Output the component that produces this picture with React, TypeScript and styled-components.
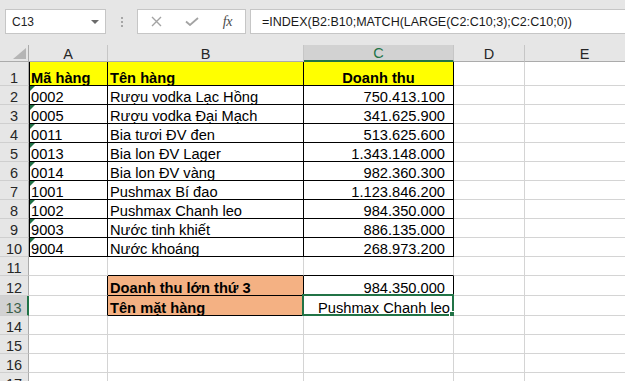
import React from 'react';
import styled, { createGlobalStyle } from 'styled-components';

const GRID = '#d4d4d4';
const INK = '#000';
const GREEN = '#217346';
const YELLOW = '#ffff00';
const ORANGE = '#f4b183';

const GlobalStyle = createGlobalStyle`
  html, body {
    margin: 0;
    padding: 0;
    background: #e6e6e6;
  }
  body {
    font-family: 'Liberation Sans', Arial, sans-serif;
  }
`;

const Screen = styled.div`
  width: 625px;
  height: 381px;
  overflow: hidden;
  background: #e6e6e6;
`;

/* ---------- formula bar ---------- */

const FormulaBar = styled.div`
  display: flex;
  align-items: flex-start;
  height: 45px;
  box-sizing: border-box;
  padding: 9px 0 0 5px;

  & > * {
    flex-shrink: 0;
  }
`;

const Field = styled.div`
  height: 25px;
  box-sizing: border-box;
  border: 1px solid #c6c6c6;
  background: #fff;
  display: flex;
  align-items: center;
`;

const NameBox = styled(Field)`
  width: 101px;
  justify-content: space-between;
  padding: 0 6px 0 6px;
  font-size: 12px;
  color: #222;
`;

const Caret = styled.span`
  width: 0;
  height: 0;
  border-left: 4px solid transparent;
  border-right: 4px solid transparent;
  border-top: 4px solid #6b6b6b;
`;

const Grip = styled.div`
  margin-left: 15px;
  height: 25px;
  display: flex;
  flex-direction: column;
  justify-content: center;
  gap: 2px;

  i {
    display: block;
    width: 2px;
    height: 2px;
    background: #a6a6a6;
  }
`;

const ActionBox = styled(Field)`
  margin-left: 14px;
  width: 109px;
  padding-left: 1px;
`;

const ActionSlot = styled.span`
  width: 36px;
  display: flex;
  justify-content: center;
  align-items: center;
`;

const Fx = styled.span`
  font-family: 'Liberation Serif', 'Times New Roman', serif;
  font-style: italic;
  font-size: 14px;
  color: #4a4a4a;
  letter-spacing: -0.5px;
`;

const FormulaInput = styled(Field)`
  margin-left: 4px;
  width: 400px;
  padding-left: 11px;
  font-size: 12.5px;
  color: #1a1a1a;
  white-space: nowrap;
`;

/* ---------- sheet ---------- */

const Sheet = styled.div`
  display: grid;
  grid-template-columns: 29px 79px 196px 150px 71px 120px;
  grid-template-rows: 17px 24px repeat(10, 19px) 20px 20px repeat(4, 19px);
`;

const Corner = styled.div`
  box-sizing: border-box;
  border-right: 1px solid #ababab;
  border-bottom: 1px solid #ababab;
  display: flex;
  align-items: flex-end;
  justify-content: flex-end;
  padding: 0 2px 2px 0;
`;

const ColHead = styled.div<{ $active?: boolean }>`
  box-sizing: border-box;
  display: flex;
  align-items: flex-end;
  justify-content: center;
  background: ${(p) => (p.$active ? '#d2d2d2' : '#e6e6e6')};
  color: ${(p) => (p.$active ? GREEN : '#262626')};
  border-right: 1px solid #c6c6c6;
  border-bottom: ${(p) => (p.$active ? `2px solid ${GREEN}` : '1px solid #ababab')};
  font-size: 14.5px;
  line-height: 14px;
`;

const RowHead = styled.div<{ $active?: boolean }>`
  box-sizing: border-box;
  display: flex;
  align-items: flex-end;
  justify-content: center;
  background: ${(p) => (p.$active ? '#d2d2d2' : '#e6e6e6')};
  color: ${(p) => (p.$active ? '#3d5f4b' : '#262626')};
  border-bottom: 1px solid #cfcfcf;
  border-right: ${(p) => (p.$active ? `2px solid ${GREEN}` : '1px solid #ababab')};
  font-size: 14.5px;
  line-height: 14px;
`;

type Align = 'left' | 'center' | 'right';

const Cell = styled.div<{
  $fill?: string;
  $align?: Align;
  $bold?: boolean;
  $rb?: boolean;
  $bb?: boolean;
  $lb?: boolean;
  $pr?: number;
  $flag?: boolean;
}>`
  position: relative;
  box-sizing: border-box;
  display: flex;
  align-items: flex-end;
  justify-content: ${(p) =>
    p.$align === 'right' ? 'flex-end' : p.$align === 'center' ? 'center' : 'flex-start'};
  padding: 0 ${(p) => p.$pr ?? 2}px 0 2px;
  background: ${(p) => p.$fill ?? '#fff'};
  border-right: 1px solid ${(p) => (p.$rb ? INK : GRID)};
  border-bottom: 1px solid ${(p) => (p.$bb ? INK : GRID)};
  box-shadow: ${(p) => (p.$lb ? `inset 1px 0 0 ${INK}` : 'none')};
  color: #000;
  font-size: 14.67px;
  line-height: 14px;
  font-weight: ${(p) => (p.$bold ? 700 : 400)};
  white-space: nowrap;

  &::before {
    content: '';
    display: ${(p) => (p.$flag ? 'block' : 'none')};
    position: absolute;
    top: 0;
    left: 1px;
    width: 0;
    height: 0;
    border-top: 5px solid #1e7145;
    border-right: 5px solid transparent;
  }
`;

const Selection = styled.div`
  position: absolute;
  top: -2px;
  left: -2px;
  right: -1px;
  bottom: -1px;
  border: 2px solid ${GREEN};
  pointer-events: none;
`;

const Handle = styled.div`
  position: absolute;
  right: -4px;
  bottom: -4px;
  width: 5px;
  height: 5px;
  background: ${GREEN};
  border: 1px solid #fff;
`;

type CellSpec = {
  text?: string;
  bold?: boolean;
  align?: Align;
  fill?: string;
  rb?: boolean;
  bb?: boolean;
  lb?: boolean;
  pr?: number;
  flag?: boolean;
  selected?: boolean;
};

const products: [string, string, string][] = [
  ['0002', 'Rượu vodka Lạc Hồng', '750.413.100'],
  ['0005', 'Rượu vodka Đại Mạch', '341.625.900'],
  ['0011', 'Bia tươi ĐV đen', '513.625.600'],
  ['0013', 'Bia lon ĐV Lager', '1.343.148.000'],
  ['0014', 'Bia lon ĐV vàng', '982.360.300'],
  ['1001', 'Pushmax Bí đao', '1.123.846.200'],
  ['1002', 'Pushmax Chanh leo', '984.350.000'],
  ['9003', 'Nước tinh khiết', '886.135.000'],
  ['9004', 'Nước khoáng', '268.973.200'],
];

const COLS = ['A', 'B', 'C', 'D', 'E'];
const ROW_COUNT = 17;
const ACTIVE_ROW = 13;
const ACTIVE_COL = 'C';

function rowCells(row: number): CellSpec[] {
  const empty: CellSpec = {};
  if (row === 1) {
    return [
      { text: 'Mã hàng', bold: true, fill: YELLOW, rb: true, bb: true, lb: true },
      { text: 'Tên hàng', bold: true, fill: YELLOW, rb: true, bb: true },
      { text: 'Doanh thu', bold: true, fill: YELLOW, align: 'center', rb: true, bb: true },
      empty,
      empty,
    ];
  }
  if (row >= 2 && row <= 10) {
    const [code, name, amount] = products[row - 2];
    return [
      { text: code, flag: true, rb: true, bb: true, lb: true },
      { text: name, rb: true, bb: true },
      { text: amount, align: 'right', pr: 8, rb: true, bb: true },
      empty,
      empty,
    ];
  }
  if (row === 11) return [empty, { bb: true }, { bb: true }, empty, empty];
  if (row === 12) {
    return [
      { rb: true },
      { text: 'Doanh thu lớn thứ 3', bold: true, fill: ORANGE, rb: true, bb: true },
      { text: '984.350.000', align: 'right', pr: 8, rb: true, bb: true },
      empty,
      empty,
    ];
  }
  if (row === 13) {
    return [
      { rb: true },
      { text: 'Tên mặt hàng', bold: true, fill: ORANGE, rb: true, bb: true },
      { text: 'Pushmax Chanh leo', align: 'right', pr: 3, rb: true, bb: true, selected: true },
      empty,
      empty,
    ];
  }
  return [empty, empty, empty, empty, empty];
}

const CancelIcon = () => (
  <svg width="11" height="11" viewBox="0 0 11 11">
    <path d="M1 1 L10 10 M10 1 L1 10" stroke="#a3a3a3" strokeWidth="1.4" fill="none" />
  </svg>
);

const EnterIcon = () => (
  <svg width="14" height="9" viewBox="0 0 14 9">
    <path d="M1 4.5 L5 8 L13 1" stroke="#a3a3a3" strokeWidth="1.8" fill="none" />
  </svg>
);

const SelectAll = () => (
  <svg width="13" height="11" viewBox="0 0 13 11">
    <polygon points="13,0 13,11 0,11" fill="#b5b5b5" />
  </svg>
);

export default function App() {
  const rows = Array.from({ length: ROW_COUNT }, (_, i) => i + 1);
  return (
    <Screen>
      <GlobalStyle />
      <FormulaBar>
        <NameBox>
          <span>C13</span>
          <Caret />
        </NameBox>
        <Grip>
          <i />
          <i />
          <i />
        </Grip>
        <ActionBox>
          <ActionSlot>
            <CancelIcon />
          </ActionSlot>
          <ActionSlot>
            <EnterIcon />
          </ActionSlot>
          <ActionSlot>
            <Fx>fx</Fx>
          </ActionSlot>
        </ActionBox>
        <FormulaInput>=INDEX(B2:B10;MATCH(LARGE(C2:C10;3);C2:C10;0))</FormulaInput>
      </FormulaBar>
      <Sheet>
        <Corner>
          <SelectAll />
        </Corner>
        {COLS.map((c) => (
          <ColHead key={c} $active={c === ACTIVE_COL}>
            {c}
          </ColHead>
        ))}
        {rows.map((r) => (
          <React.Fragment key={r}>
            <RowHead $active={r === ACTIVE_ROW}>{r}</RowHead>
            {rowCells(r).map((cell, i) => (
              <Cell
                key={COLS[i]}
                $fill={cell.fill}
                $align={cell.align}
                $bold={cell.bold}
                $rb={cell.rb}
                $bb={cell.bb}
                $lb={cell.lb}
                $pr={cell.pr}
                $flag={cell.flag}
              >
                {cell.text}
                {cell.selected && (
                  <Selection>
                    <Handle />
                  </Selection>
                )}
              </Cell>
            ))}
          </React.Fragment>
        ))}
      </Sheet>
    </Screen>
  );
}
